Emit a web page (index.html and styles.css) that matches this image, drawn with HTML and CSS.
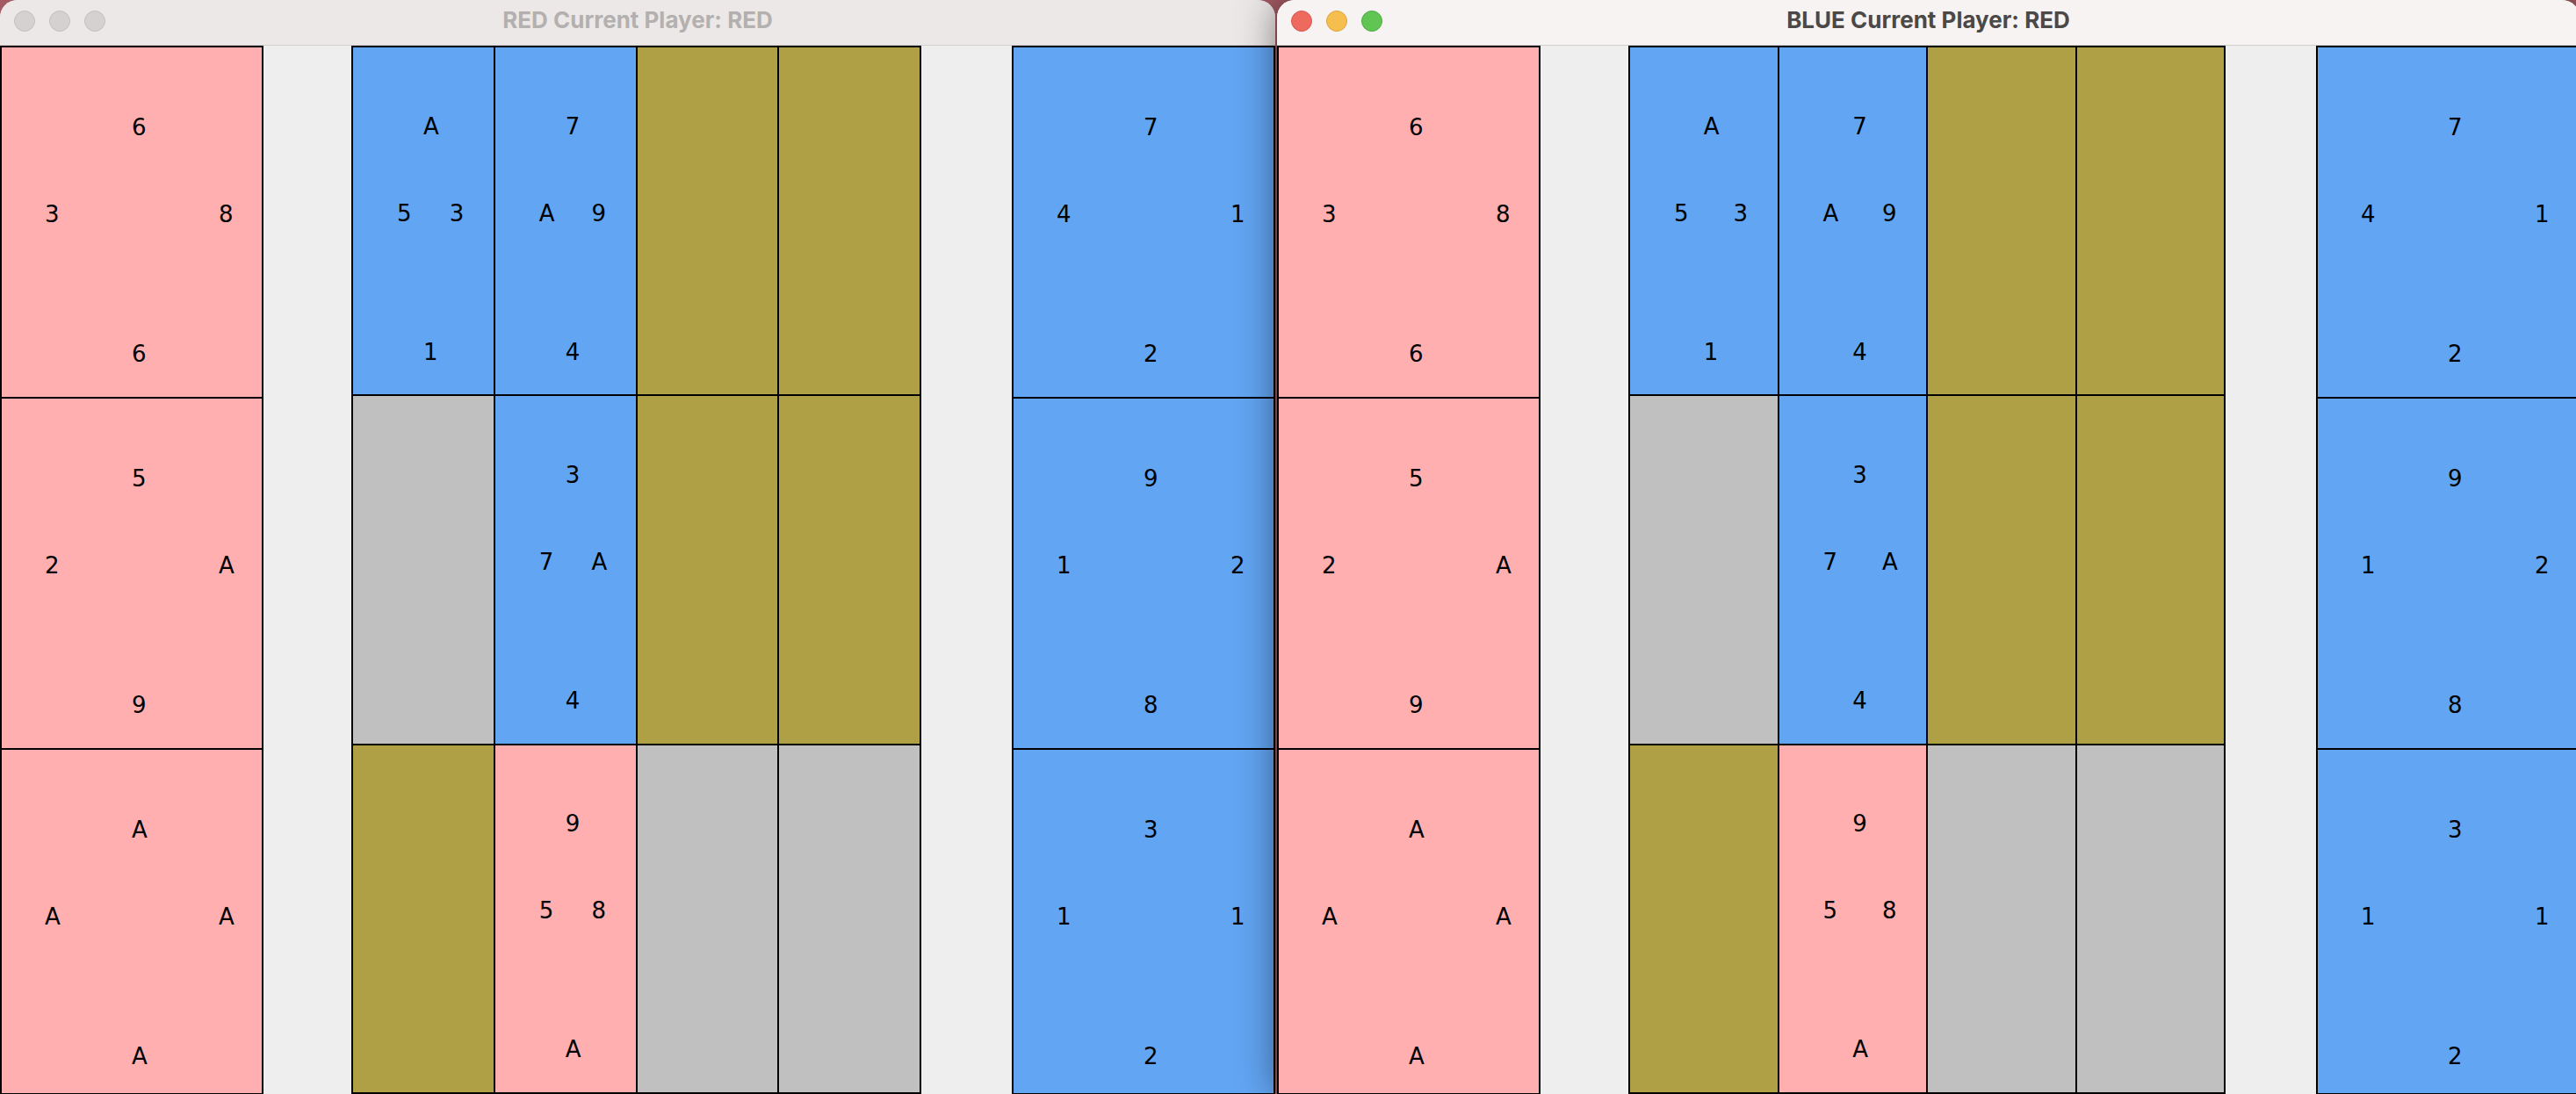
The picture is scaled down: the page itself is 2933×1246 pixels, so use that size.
FILE: index.html
```html
<!doctype html>
<html lang="en">
<head>
	<meta charset="UTF-8">
	<title>Current Player</title>
	<link rel="stylesheet" href="styles.css">
</head>
<body>
	<div class="desk">

		<div class="window red_win">
			<header class="titlebar">
				<div class="lights"><span></span><span></span><span></span></div>
				<div class="title">RED Current Player: RED</div>
			</header>
			<section class="table">
				<div class="hand">
					<div class="card pink"><span class="top">6</span><span class="left">3</span><span class="right">8</span><span class="bottom">6</span></div>
					<div class="card pink"><span class="top">5</span><span class="left">2</span><span class="right">A</span><span class="bottom">9</span></div>
					<div class="card pink"><span class="top">A</span><span class="left">A</span><span class="right">A</span><span class="bottom">A</span></div>
				</div>
				<div class="spacer"></div>
				<div class="board">
					<div class="card blue"><span class="top">A</span><span class="left">5</span><span class="right">3</span><span class="bottom">1</span></div>
					<div class="card blue"><span class="top">7</span><span class="left">A</span><span class="right">9</span><span class="bottom">4</span></div>
					<div class="card olive"></div>
					<div class="card olive"></div>

					<div class="card gray"></div>
					<div class="card blue"><span class="top">3</span><span class="left">7</span><span class="right">A</span><span class="bottom">4</span></div>
					<div class="card olive"></div>
					<div class="card olive"></div>

					<div class="card olive"></div>
					<div class="card pink"><span class="top">9</span><span class="left">5</span><span class="right">8</span><span class="bottom">A</span></div>
					<div class="card gray"></div>
					<div class="card gray"></div>
				</div>
				<div class="spacer wide"></div>
				<div class="hand">
					<div class="card blue"><span class="top">7</span><span class="left">4</span><span class="right">1</span><span class="bottom">2</span></div>
					<div class="card blue"><span class="top">9</span><span class="left">1</span><span class="right">2</span><span class="bottom">8</span></div>
					<div class="card blue"><span class="top">3</span><span class="left">1</span><span class="right">1</span><span class="bottom">2</span></div>
				</div>
			</section>
		</div>

		<div class="window blue_win">
			<header class="titlebar">
				<div class="lights"><span class="close"></span><span class="min"></span><span class="max"></span></div>
				<div class="title">BLUE Current Player: RED</div>
			</header>
			<section class="table">
				<div class="hand">
					<div class="card pink"><span class="top">6</span><span class="left">3</span><span class="right">8</span><span class="bottom">6</span></div>
					<div class="card pink"><span class="top">5</span><span class="left">2</span><span class="right">A</span><span class="bottom">9</span></div>
					<div class="card pink"><span class="top">A</span><span class="left">A</span><span class="right">A</span><span class="bottom">A</span></div>
				</div>
				<div class="spacer"></div>
				<div class="board">
					<div class="card blue"><span class="top">A</span><span class="left">5</span><span class="right">3</span><span class="bottom">1</span></div>
					<div class="card blue"><span class="top">7</span><span class="left">A</span><span class="right">9</span><span class="bottom">4</span></div>
					<div class="card olive"></div>
					<div class="card olive"></div>

					<div class="card gray"></div>
					<div class="card blue"><span class="top">3</span><span class="left">7</span><span class="right">A</span><span class="bottom">4</span></div>
					<div class="card olive"></div>
					<div class="card olive"></div>

					<div class="card olive"></div>
					<div class="card pink"><span class="top">9</span><span class="left">5</span><span class="right">8</span><span class="bottom">A</span></div>
					<div class="card gray"></div>
					<div class="card gray"></div>
				</div>
				<div class="spacer wide"></div>
				<div class="hand">
					<div class="card blue"><span class="top">7</span><span class="left">4</span><span class="right">1</span><span class="bottom">2</span></div>
					<div class="card blue"><span class="top">9</span><span class="left">1</span><span class="right">2</span><span class="bottom">8</span></div>
					<div class="card blue"><span class="top">3</span><span class="left">1</span><span class="right">1</span><span class="bottom">2</span></div>
				</div>
			</section>
		</div>

	</div>
</body>
</html>
```

FILE: styles.css
```css
*{
	padding: 0;
	margin: 0;
	box-sizing: border-box;
}
html,body{
	width: 100%;
	height: 100%;
	overflow: hidden;
}
body{
	background: #a35a62;
	font-family: "DejaVu Sans", sans-serif;
}

.desk{
	display: flex;
	gap: 2px;
	height: 1246px;
}
.window{
	flex: none;
	height: 1246px;
	display: flex;
	flex-direction: column;
	border-radius: 20px 20px 0 0;
	overflow: hidden;
	background: #EEEEEE;
}
.red_win{
	width: 1452px;
}
.blue_win{
	width: 1483px;
	box-shadow: 0 0 44px rgba(0,0,0,0.5);
}

/* title bar */
.titlebar{
	height: 52px;
	flex: none;
	display: grid;
	grid-template-columns: 1fr auto 1fr;
	align-items: start;
	border-bottom: 1px solid #d3cfce;
}
.red_win .titlebar{
	background: #ECE8E7;
}
.blue_win .titlebar{
	background: #F6F3F2;
}
.lights{
	display: flex;
	gap: 16px;
	padding: 12px 0 0 16px;
}
.lights span{
	width: 24px;
	height: 24px;
	border-radius: 50%;
	background: #D5D1D0;
	border: 1px solid #C3BFBE;
}
.lights .close{
	background: #EE6A5F;
	border-color: #D8574C;
}
.lights .min{
	background: #F5BE4F;
	border-color: #DCA43C;
}
.lights .max{
	background: #61C554;
	border-color: #4EAA42;
}
.title{
	padding-top: 10px;
	font-family: Inter, "Liberation Sans", sans-serif;
	font-weight: 700;
	font-size: 26px;
	line-height: 26px;
	white-space: nowrap;
}
.red_win .title{
	color: #B4B0AF;
}
.blue_win .title{
	color: #4B4848;
}

/* game table */
.table{
	flex: 1;
	min-height: 0;
	display: flex;
	background: #EEEEEE;
}
.hand{
	width: 300px;
	flex: none;
	display: flex;
	flex-direction: column;
	border: 1px solid #000;
	overflow: hidden;
}
.hand .card{
	height: 400px;
	flex: none;
}
.spacer{
	width: 100px;
	flex: none;
}
.spacer.wide{
	width: 103px;
}
.board{
	flex: 1;
	display: grid;
	grid-template-columns: repeat(4, 1fr);
	grid-template-rows: repeat(3, 1fr);
	border: 1px solid #000;
}

.card{
	border: 1px solid #000;
	display: grid;
	grid-template-columns: 50px 1fr 1fr 50px;
	grid-template-rows: calc(25% - 24px) 30px calc(25% - 30px) 30px calc(40% - 30px) 30px 1fr;
	font-size: 26px;
	line-height: 30px;
	color: #000;
	min-height: 0;
}
.hand .card{
	grid-template-columns: 49px 1fr 1fr 49px;
}
.card span{
	white-space: nowrap;
}
.top{
	grid-row: 2;
	grid-column: 3;
}
.left{
	grid-row: 4;
	grid-column: 2;
}
.right{
	grid-row: 4;
	grid-column: 4;
}
.bottom{
	grid-row: 6;
	grid-column: 3;
}

.pink{
	background: #FFAFAF;
}
.blue{
	background: #62A5F3;
}
.olive{
	background: #B0A045;
}
.gray{
	background: #C0C0C0;
}
```
